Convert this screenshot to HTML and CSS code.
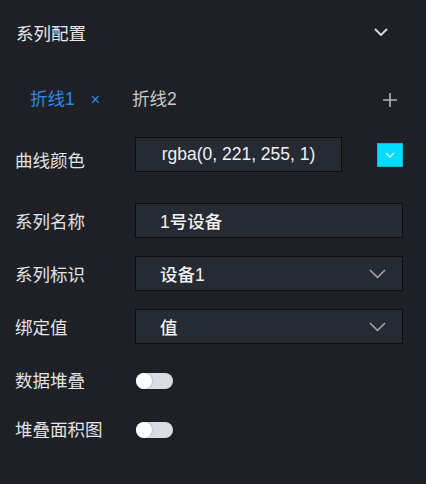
FILE: index.html
```html
<!DOCTYPE html>
<html lang="zh">
<head>
  <meta charset="UTF-8" />
  <meta name="viewport" content="width=device-width, initial-scale=1.0">
  <title>系列配置</title>
  <link rel="stylesheet" href="styles.css">
</head>
<body>
  <div class="panel">
    <div class="section-head">
      <span class="section-title">系列配置</span>
      <svg class="head-arrow" width="14" height="8" viewBox="0 0 14 8"><path d="M1 1 L7 7 L13 1" fill="none" stroke="#d6d6d6" stroke-width="2"/></svg>
    </div>

    <div class="tabs">
      <div class="tab active">折线1<span class="tab-close">×</span></div>
      <div class="tab">折线2</div>
      <svg class="tab-add" width="16" height="16" viewBox="0 0 16 16"><path d="M8 1 V15 M1 8 H15" fill="none" stroke="#b4b4b4" stroke-width="1.6"/></svg>
    </div>

    <div class="form">
      <div class="row row-color">
        <label class="label">曲线颜色</label>
        <div class="input color-input">rgba(0, 221, 255, 1)</div>
        <div class="swatch">
          <svg width="10" height="6" viewBox="0 0 10 6"><path d="M1 1 L5 5 L9 1" fill="none" stroke="rgba(255,255,255,0.75)" stroke-width="1.5"/></svg>
        </div>
      </div>

      <div class="row row-name">
        <label class="label">系列名称</label>
        <div class="input">1号设备</div>
      </div>

      <div class="row row-select">
        <label class="label">系列标识</label>
        <div class="input select">
          <span>设备1</span>
          <svg width="17" height="10" viewBox="0 0 17 10"><path d="M1 1 L8.5 8.5 L16 1" fill="none" stroke="#a9abb0" stroke-width="1.5"/></svg>
        </div>
      </div>

      <div class="row row-select">
        <label class="label">绑定值</label>
        <div class="input select">
          <span>值</span>
          <svg width="17" height="10" viewBox="0 0 17 10"><path d="M1 1 L8.5 8.5 L16 1" fill="none" stroke="#a9abb0" stroke-width="1.5"/></svg>
        </div>
      </div>

      <div class="row row-switch">
        <label class="label">数据堆叠</label>
        <div class="switch"><span class="knob"></span></div>
      </div>

      <div class="row row-switch row-last">
        <label class="label">堆叠面积图</label>
        <div class="switch"><span class="knob"></span></div>
      </div>
    </div>
  </div>
</body>
</html>
```

FILE: styles.css
```css
body, html {
  margin: 0; padding: 0;
  background: #1e2025;
  font-family: "Liberation Sans", "Noto Sans CJK SC", sans-serif;
  font-size: 17.5px;
}
.panel {
  width: 426px;
  height: 484px;
  box-sizing: border-box;
  padding: 0 23px 0 15px;
  color: #e2e3e5;
}
.section-head {
  height: 64px;
  display: flex;
  align-items: center;
  justify-content: space-between;
  padding-right: 15px;
}
.section-title {
  padding-left: 1px;
  color: #e8e8e8;
}
.tabs {
  height: 36px;
  margin-top: 15px;
  display: flex;
  align-items: center;
  padding-left: 15px;
}
.tab {
  color: #c7c8cb;
}
.tab.active {
  color: #2f88ea;
  margin-right: 32px;
}
.tab-close {
  font-size: 16px;
  margin-left: 16px;
}
.tab-add {
  margin-left: auto;
  margin-right: 5px;
  margin-top: 5px;
}
.form {
  margin-top: 22px;
}
.row {
  display: flex;
  align-items: center;
}
.label {
  width: 120px;
  flex: none;
}
.input {
  flex: 1;
  height: 35px;
  box-sizing: border-box;
  border: 1px solid #0c0d10;
  background: #262a32;
  color: #f1f1f1;
  font-weight: 500;
  display: flex;
  align-items: center;
  padding-left: 24px;
}
.row-color .label {
  padding-top: 9px;
}
.color-input {
  flex: none;
  width: 207px;
  padding-left: 0;
  justify-content: center;
}
.swatch {
  width: 26px;
  height: 24px;
  margin-left: auto;
  background: #00ddff;
  box-sizing: border-box;
  border: 1px solid #0fb8d4;
  display: flex;
  align-items: center;
  justify-content: center;
}
.row-name {
  margin-top: 31px;
}
.row-select {
  margin-top: 18px;
}
.select {
  justify-content: space-between;
  padding-right: 16px;
}
.row-switch {
  height: 35px;
  margin-top: 18px;
}
.row-last {
  margin-top: 14px;
}
.switch {
  width: 37px;
  height: 16px;
  margin-top: 3px;
  border-radius: 8px;
  background: #dcdde2;
  position: relative;
  margin-left: 1px;
}
.knob {
  position: absolute;
  left: 0;
  top: 0;
  width: 16px;
  height: 16px;
  border-radius: 50%;
  background: #ffffff;
  box-shadow: 0 0 2px rgba(0,0,0,0.35);
}
```
